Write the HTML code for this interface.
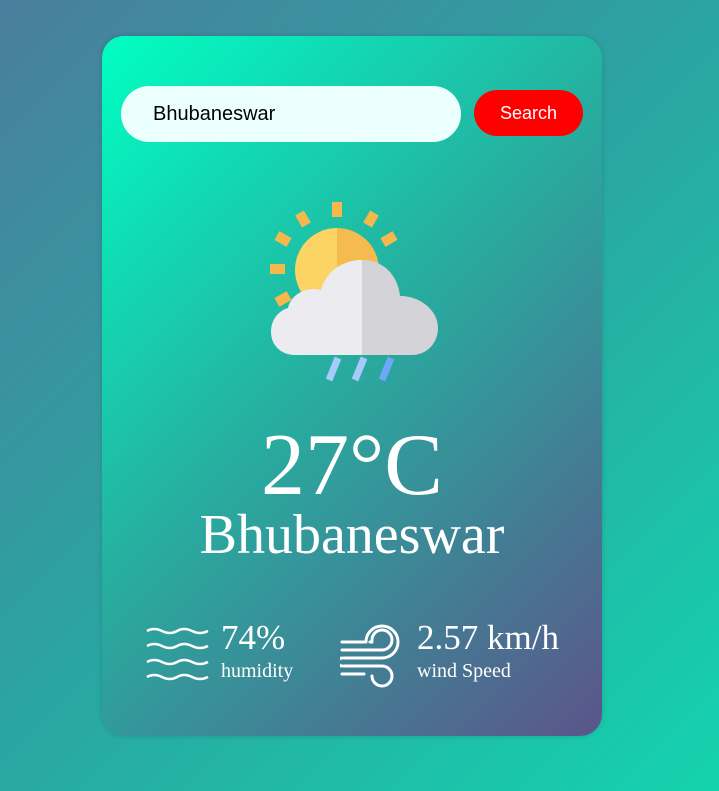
<!DOCTYPE html><html><head><style>
body{margin:0;width:719px;height:791px;background:linear-gradient(135deg,#4a7e9c 0%,#2aa6a2 50%,#14d3ad 100%);font-family:"Liberation Serif",serif;position:relative;overflow:hidden}
.card{position:absolute;left:102px;top:36px;width:500px;height:700px;border-radius:22px;background:linear-gradient(135deg,#00ffc3 0%,#25b0a0 45%,#5b548a 100%);box-shadow:0 0 6px rgba(0,0,0,.15)}
.inp{position:absolute;left:19px;top:50px;width:340px;height:56px;border-radius:28px;background:#ebfffc;font:20px "Liberation Sans",sans-serif;line-height:56px;padding-left:32px;box-sizing:border-box;color:#000}
.btn{position:absolute;left:372px;top:54px;width:109px;height:46px;border-radius:23px;background:#ff0000;color:#fff;font:18px "Liberation Sans",sans-serif;line-height:46px;text-align:center}
.t{position:absolute;left:0;width:500px;text-align:center;color:#fff}
.s{position:absolute;color:#fff}
</style></head><body><div class="card">
<div class="inp">Bhubaneswar</div><div class="btn">Search</div>
<svg style="position:absolute;left:166px;top:164px" width="172" height="186" viewBox="0 0 172 186">
<g fill="#f5b84c"><rect x="64" y="2" width="10" height="15"/><rect x="30" y="12" width="10" height="14" transform="rotate(-30 35 19)"/><rect x="98" y="12" width="10" height="14" transform="rotate(30 103 19)"/><rect x="8" y="34" width="14" height="10" transform="rotate(30 15 39)"/><rect x="114" y="34" width="14" height="10" transform="rotate(-30 121 39)"/><rect x="2" y="64" width="15" height="10"/><rect x="8" y="94" width="14" height="10" transform="rotate(-30 15 99)"/></g>
<path d="M69 28a42 42 0 0 0 0 84z" fill="#fbd464"/><path d="M69 28a42 42 0 0 1 0 84z" fill="#f5bb4f"/>
<path d="M94 60c-22 0-37 14-41 30-14-4-30 4-33 18-10 3-17 12-17 24 0 13 10 23 24 23h67z" fill="#ecebf0"/>
<path d="M94 60c22 0 36 16 38 36 20 0 38 14 38 32 0 15-11 27-26 27H94z" fill="#d4d3d8"/>
<g stroke-width="7"><path d="M70 158l-9 22" stroke="#a6cbfb"/><path d="M96 158l-9 22" stroke="#a6cbfb"/><path d="M123 158l-9 22" stroke="#6fa7f7"/></g>
</svg>
<div class="t" style="top:382px;font-size:88px;line-height:96px">27°C</div>
<div class="t" style="top:468px;font-size:56px;line-height:62px">Bhubaneswar</div>
<svg style="position:absolute;left:44px;top:590px" width="64" height="56" viewBox="0 0 64 56" fill="none" stroke="#fff" stroke-width="2.5"><path d="M1 5q7-4 15 0t15 0 15 0 16 0M1 20q7-4 15 0t15 0 15 0 16 0M1 36q7-4 15 0t15 0 15 0 16 0M1 51q7-4 15 0t15 0 15 0 16 0"/></svg>
<div class="s" style="left:119px;top:582px;font-size:35px">74%</div>
<div class="s" style="left:119px;top:624px;font-size:20px">humidity</div>
<svg style="position:absolute;left:238px;top:586px" width="66" height="66" viewBox="0 0 66 66" fill="none" stroke="#fff" stroke-width="3" stroke-linecap="round"><path d="M2 20h22M30 20h2"/><path d="M2 28h40a10 10 0 1 0-10-10"/><path d="M4 36h38a16 16 0 1 0-16-16"/><path d="M4 44h38a10 10 0 1 1-10 10"/><path d="M2 52h22"/><path d="M2 44a4 4 0 0 1 0-8"/></svg>
<div class="s" style="left:315px;top:582px;font-size:35px">2.57 km/h</div>
<div class="s" style="left:315px;top:624px;font-size:20px">wind Speed</div>
</div></body></html>
